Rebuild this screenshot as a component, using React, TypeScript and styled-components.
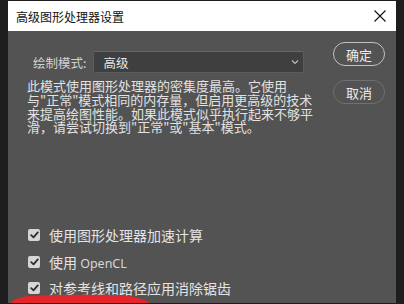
import React from "react";
import styled, { createGlobalStyle } from "styled-components";

const Global = createGlobalStyle`
  html, body { margin: 0; padding: 0; background: #1e1e1e; }
  body { width: 404px; height: 304px; overflow: hidden; }
  #root { padding: 1px 8px 0 8px; height: 303px; box-sizing: border-box; }
  * { box-sizing: border-box; }
`;

const FONT = `"Microsoft YaHei", "Noto Sans CJK SC", "Noto Sans", sans-serif`;

const Window = styled.div`
  display: flex;
  flex-direction: column;
  height: 100%;
  background: #535353;
  font-family: ${FONT};
  position: relative;
  overflow: hidden;
`;

const TitleBar = styled.div`
  height: 30px;
  background: #ffffff;
  display: flex;
  align-items: center;
  justify-content: space-between;
  padding: 0 10px 0 8px;
  flex-shrink: 0;
`;

const Title = styled.span`
  font-size: 12px;
  color: #111;
`;

const CloseBtn = styled.div`
  width: 12px;
  height: 12px;
  display: flex;
  align-items: center;
  justify-content: center;
`;

const Body = styled.div`
  flex: 1;
  display: grid;
  grid-template-columns: 1fr auto;
  padding: 11px 11px 0 19px;
`;

const Left = styled.div`
  display: flex;
  flex-direction: column;
  padding-top: 9px;
`;

const Right = styled.div`
  display: flex;
  flex-direction: column;
  gap: 14px;
`;

const ModeRow = styled.div`
  display: flex;
  align-items: center;
  padding-left: 6px;
  gap: 7px;
`;

const Label = styled.span`
  font-size: 12.5px;
  color: #d2d2d2;
`;

const Select = styled.div`
  width: 211px;
  height: 22px;
  background: #3f3f3f;
  border: 1px solid #5c5c5c;
  border-top-color: #666;
  border-radius: 2px;
  display: flex;
  align-items: center;
  justify-content: space-between;
  padding: 0 4px 0 9px;
  font-size: 12.5px;
  color: #e6e6e6;
`;

const Desc = styled.div`
  margin-top: 6px;
  font-size: 13px;
  line-height: 13.8px;
  color: #e2e2e2;
  white-space: nowrap;
`;

const DescLine = styled.div`
  height: 13.8px;
`;

const Checks = styled.div`
  margin-top: 88px;
  display: flex;
  flex-direction: column;
`;

const CheckRow = styled.div`
  height: 26.5px;
  display: flex;
  align-items: center;
  gap: 9px;
  padding-left: 1px;
  font-size: 14px;
  color: #e4e4e4;
`;

const Box = styled.span`
  width: 12px;
  height: 12px;
  border-radius: 2px;
  background: #d6d6d6;
  display: flex;
  align-items: center;
  justify-content: center;
`;

const Latin = styled.span`
  font-family: "Noto Sans", "Open Sans", sans-serif;
  font-size: 12.5px;
  color: #d6d6d6;
`;

const PillButton = styled.button<{ $primary?: boolean }>`
  width: 52px;
  height: 24px;
  border-radius: 12px;
  background: #535353;
  border: 1.5px solid ${(p) => (p.$primary ? "#c2c2c2" : "#707070")};
  color: #ececec;
  font-family: ${FONT};
  font-size: 13px;
  padding: 0;
  display: flex;
  align-items: center;
  justify-content: center;
`;

const Annotation = styled.svg`
  position: absolute;
  left: 0;
  bottom: 0;
  pointer-events: none;
`;

const Check = () => (
  <Box>
    <svg width="9" height="8" viewBox="0 0 9 8">
      <path d="M1.2 4.2 L3.5 6.3 L7.8 1.4" fill="none" stroke="#2e2e2e" strokeWidth="1.8" strokeLinecap="round" strokeLinejoin="round" />
    </svg>
  </Box>
);

const lines = [
  "此模式使用图形处理器的密集度最高。它使用",
  "与\"正常\"模式相同的内存量，但启用更高级的技术",
  "来提高绘图性能。如果此模式似乎执行起来不够平",
  "滑，请尝试切换到\"正常\"或\"基本\"模式。",
];

export default function App() {
  return (
    <>
      <Global />
      <Window>
        <TitleBar>
          <Title>高级图形处理器设置</Title>
          <CloseBtn>
            <svg width="12" height="12" viewBox="0 0 12 12">
              <path d="M0.5 0.5 L11.5 11.5 M11.5 0.5 L0.5 11.5" stroke="#111" strokeWidth="1.1" />
            </svg>
          </CloseBtn>
        </TitleBar>
        <Body>
          <Left>
            <ModeRow>
              <Label>绘制模式:</Label>
              <Select>
                <span>高级</span>
                <svg width="8" height="6" viewBox="0 0 8 6">
                  <path d="M1 1.5 L4 4.5 L7 1.5" fill="none" stroke="#bdbdbd" strokeWidth="1.2" />
                </svg>
              </Select>
            </ModeRow>
            <Desc>
              {lines.map((l) => (
                <DescLine key={l}>{l}</DescLine>
              ))}
            </Desc>
            <Checks>
              <CheckRow>
                <Check />
                使用图形处理器加速计算
              </CheckRow>
              <CheckRow>
                <Check />
                <span>
                  使用 <Latin>OpenCL</Latin>
                </span>
              </CheckRow>
              <CheckRow>
                <Check />
                对参考线和路径应用消除锯齿
              </CheckRow>
            </Checks>
          </Left>
          <Right>
            <PillButton $primary>确定</PillButton>
            <PillButton>取消</PillButton>
          </Right>
        </Body>
        <Annotation width="160" height="12" viewBox="0 0 160 12">
          <path d="M2 12 Q 8 6 22 5 Q 60 3 110 4 Q 132 5 142 12 Z" fill="#e4262a" />
        </Annotation>
      </Window>
    </>
  );
}
